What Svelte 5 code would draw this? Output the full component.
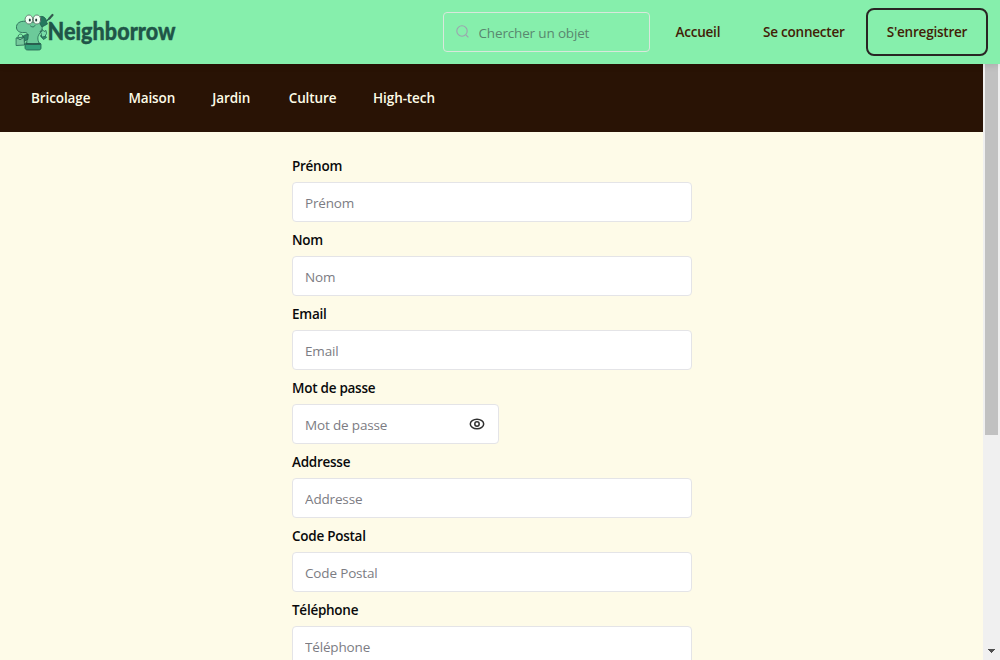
<script>
  const categories = [
    { label: 'Bricolage', width: 60 },
    { label: 'Maison', width: 46.5 },
    { label: 'Jardin', width: 39 },
    { label: 'Culture', width: 47 },
    { label: 'High-tech', width: 64 }
  ];
  const fields = [
    { label: 'Prénom' },
    { label: 'Nom' },
    { label: 'Email', type: 'email' },
    { label: 'Mot de passe', password: true },
    { label: 'Addresse' },
    { label: 'Code Postal' },
    { label: 'Téléphone', type: 'tel' }
  ];
  let visible = $state(false);
</script>

<div class="page">
  <header>
    <svg class="logo" viewBox="0 0 170 40" aria-label="Neighborrow">
      <g stroke="#23604f" stroke-width=".8" stroke-linejoin="round" stroke-linecap="round">
        <path d="M35 8.500l3-2.500" stroke-width="1.500" />
        <path d="M37.300 6.500L40.500 3" stroke="#34584f" stroke-width="2.200" />
        <path d="M15 9.500C10 8.500 5 10 4.500 14.500 4 19 8 21 12 20.500c3-.3 4 1 3.500 4L14.500 32h13c-2.500-5-2-8 .5-11 3-3.500 3-8 0-10z" fill="#6cca9a" />
        <path d="M27 5c4-2 7.500 1 7.500 5l1 2-5.500 3-2-3z" fill="#25795e" />
        <path d="M16 22.500c-3 0-5.500 1-6 4l2 3 3.500-2zM28.500 24l3 3.500 3-2-2-3z" fill="#2f8968" />
        <path d="M29 21l-1-2 2 .5.500-2 1.500 2 2-1 .5 3-1.500 3-3 .5z" fill="#78dda7" />
        <path d="M6 25c0-4 5-4 5 0" fill="none" />
        <path d="M4.500 26l7.500-1 .5 8-8 .5z" fill="#77c99d" />
        <path d="M5 25.800l3 2 4-2.500" fill="none" />
        <path d="M14 31c3 1.500 10 1.500 14 0l1 1v4c0 1.500-1 2-2.500 2h-11C14 38 13 37 13 35.500V32z" fill="#35a17a" />
        <path d="M14 32h14" stroke="#275247" stroke-width="1.400" />
        <ellipse cx="17" cy="7.500" rx="3.900" ry="4.500" fill="#f1fff4" stroke="#53665e" />
        <ellipse cx="25" cy="7.500" rx="3.700" ry="4.500" fill="#f1fff4" stroke="#53665e" />
        <ellipse cx="17.800" cy="8" rx="1" ry="1.600" fill="#203b38" stroke="none" />
        <ellipse cx="24.200" cy="8" rx="1" ry="1.600" fill="#203b38" stroke="none" />
        <path d="M18.500 14q3 2.500 4.500-.5" fill="none" />
      </g>
      <text x="35.5" y="28" textLength="128" lengthAdjust="spacingAndGlyphs">Neighborrow</text>
    </svg>
    <label class="search">
      <svg viewBox="0 0 14 14"><circle cx="6" cy="6" r="5.2" /><path d="M10 10l2.400 2.300" /></svg>
      <input placeholder="Chercher un objet" aria-label="Chercher un objet" />
    </label>
    <nav class="account">
      <a class="home" href="#home">Accueil</a>
      <a class="login" href="#login">Se connecter</a>
      <a class="register" href="#register">S'enregistrer</a>
    </nav>
  </header>
  <div class="body">
    <main>
      <nav class="categories">
        {#each categories as c}
          <a href="#{c.label}" style:width="{c.width}px">{c.label}</a>
        {/each}
      </nav>
      <form>
        {#each fields as f}
          <div class="field">
            <label for={f.label}>{f.label}</label>
            <div class="box" class:short={f.password}>
              <input id={f.label} type={f.password ? (visible ? 'text' : 'password') : (f.type ?? 'text')} placeholder={f.label} />
              {#if f.password}
                <button type="button" aria-label="Afficher" onclick={() => (visible = !visible)}>
                  <svg viewBox="0 0 16 12"><ellipse cx="8" cy="6" rx="6.7" ry="4.8" /><circle cx="8" cy="6" r="2.2" /></svg>
                </button>
              {/if}
            </div>
          </div>
        {/each}
      </form>
    </main>
    <div class="scrollbar">
      <div class="thumb"></div>
      <svg viewBox="0 0 7 4" shape-rendering="crispEdges"><path d="M0 0h7v1H6v1H5v1H4v1H3V3H2V2H1V1H0z" /></svg>
    </div>
  </div>
</div>

<style>
  :global(body) { margin: 0; overflow: hidden; }
  * { box-sizing: border-box; }
  .page {
    width: 1000px; height: 660px; overflow: hidden; display: flex; flex-direction: column;
    background: #fefbe8; font: 13.5px/20px "Open Sans", "Noto Sans", sans-serif;
  }
  a { text-decoration: none; white-space: nowrap; }
  header {
    height: 64px; flex: none; display: flex; align-items: center; padding: 0 12px;
    background: #86efac; box-shadow: 0 1px 7px rgba(0, 0, 0, .13); z-index: 1;
  }
  .logo { width: 170px; height: 40px; flex: none; overflow: visible; }
  .logo text { font: 900 25px Lato, sans-serif; fill: #1f5548; stroke: #1f5548; stroke-width: .4; }
  .search {
    width: 207px; height: 40px; margin-left: 261px; border: 1px solid #d9e7dc; border-radius: 4px;
    display: flex; align-items: center; padding: 0 12px; gap: 8.5px; flex: none;
  }
  .search svg { width: 14px; height: 14px; flex: none; fill: none; stroke: #9ca3af; stroke-width: 1.1; }
  input {
    border: 0; outline: 0; background: transparent; padding: 2px 0 0; margin: 0; min-width: 0; flex: 1;
    font: 400 13.5px/20px "Open Sans", "Noto Sans", sans-serif; letter-spacing: -.16px; color: #222;
  }
  input::placeholder { color: #7c7c83; opacity: 1; }
  .search input::placeholder { color: #59876f; }
  .account { display: flex; align-items: center; margin-left: 25.5px; font-weight: 600; }
  .account a { color: #422006; letter-spacing: -.22px; }
  .home { width: 87.5px; }
  .login { width: 103px; }
  .register {
    width: 122px; height: 48px; border: 2px solid #292524; border-radius: 8px;
    display: flex; align-items: center; justify-content: center;
  }
  .body { flex: 1; display: flex; min-height: 0; }
  main { width: 983px; overflow: hidden; }
  .categories {
    height: 68px; background: #291305; display: flex; align-items: center; gap: 37.4px; padding-left: 31px;
  }
  .categories a { color: #fefce8; font-weight: 650; letter-spacing: -.1px; flex: none; }
  form { width: 400px; margin: 24px 0 0 292px; display: flex; flex-direction: column; gap: 8px; }
  .field { height: 66px; flex: none; }
  .field label { display: block; height: 26px; color: #09090b; font-weight: 600; letter-spacing: -.26px; }
  .box {
    height: 40px; display: flex; align-items: center; border: 1px solid #e4e4e7; border-radius: 4px;
    background: #fff; padding: 0 12px;
  }
  .short { width: 207px; }
  button { border: 0; padding: 0; background: none; height: 12px; width: 16px; margin-right: 1px; display: flex; }
  button svg { width: 16px; height: 12px; fill: none; stroke: #303030; stroke-width: 1.5; }
  .scrollbar {
    width: 17px; background: #f0f0f0; display: flex; flex-direction: column;
    align-items: center; justify-content: space-between; padding-bottom: 7px;
  }
  .thumb { width: 13px; height: 371px; background: #c1c1c1; }
  .scrollbar svg { width: 7px; height: 4px; fill: #505050; }
</style>
